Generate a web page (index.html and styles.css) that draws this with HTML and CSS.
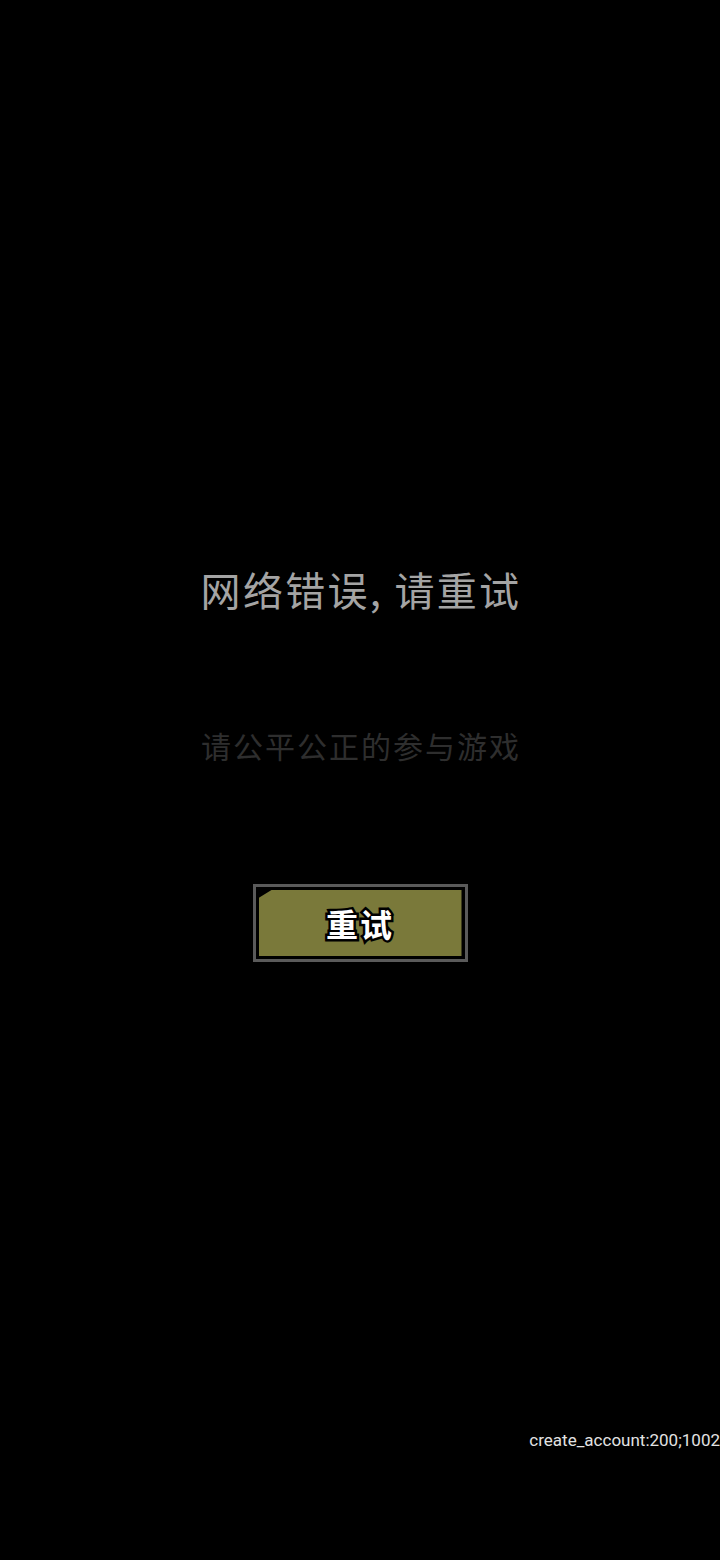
FILE: index.html
```html
<!DOCTYPE html>
<html lang="zh-CN">
<head>
<meta charset="utf-8">
<link rel="stylesheet" href="styles.css">
</head>
<body>
<main class="screen">
  <h1 class="title">网络错误, 请重试</h1>
  <p class="subtitle">请公平公正的参与游戏</p>
  <button class="retry"><span class="retry-face"><span class="retry-label">重试</span></span></button>
  <div class="status">create_account:200;1002</div>
</main>
</body>
</html>
```
FILE: styles.css
```css
html, body {
  margin: 0;
  padding: 0;
  background: #000;
}
.screen {
  width: 720px;
  height: 1560px;
  display: flex;
  flex-direction: column;
  align-items: center;
  font-family: "Noto Sans CJK SC", "Noto Sans", sans-serif;
  overflow: hidden;
}
.title {
  margin: 565px 0 0 0;
  font-size: 40px;
  line-height: 48px;
  font-weight: 400;
  letter-spacing: 2.3px;
  color: #a4a4a4;
  padding-left: 2px;
}
.subtitle {
  margin: 112px 0 0 0;
  font-size: 30px;
  line-height: 40px;
  letter-spacing: 2px;
  color: #2e2e2e;
  padding-left: 2px;
}
.retry {
  margin: 119px 0 0 0;
  width: 215px;
  height: 78px;
  box-sizing: border-box;
  border: 3px solid #5a5a5a;
  padding: 3px;
  background: #000;
  display: flex;
  cursor: pointer;
}
.retry-face {
  flex: 1;
  background: #7a793a;
  clip-path: polygon(0 8px, 13px 0, 100% 0, 100% 100%, 0 100%);
  display: flex;
  align-items: center;
  justify-content: center;
}
.retry-label {
  font-family: "Noto Sans CJK SC", sans-serif;
  font-size: 32px;
  font-weight: 700;
  line-height: 40px;
  color: #fff;
  -webkit-text-stroke: 5px #000;
  paint-order: stroke fill;
  letter-spacing: 2px;
  margin-top: -1px;
}
.status {
  align-self: flex-end;
  margin-top: 468px;
  font-family: Roboto, "Liberation Sans", sans-serif;
  font-size: 17px;
  line-height: 20px;
  color: #e2e2e2;
  white-space: nowrap;
}
```
